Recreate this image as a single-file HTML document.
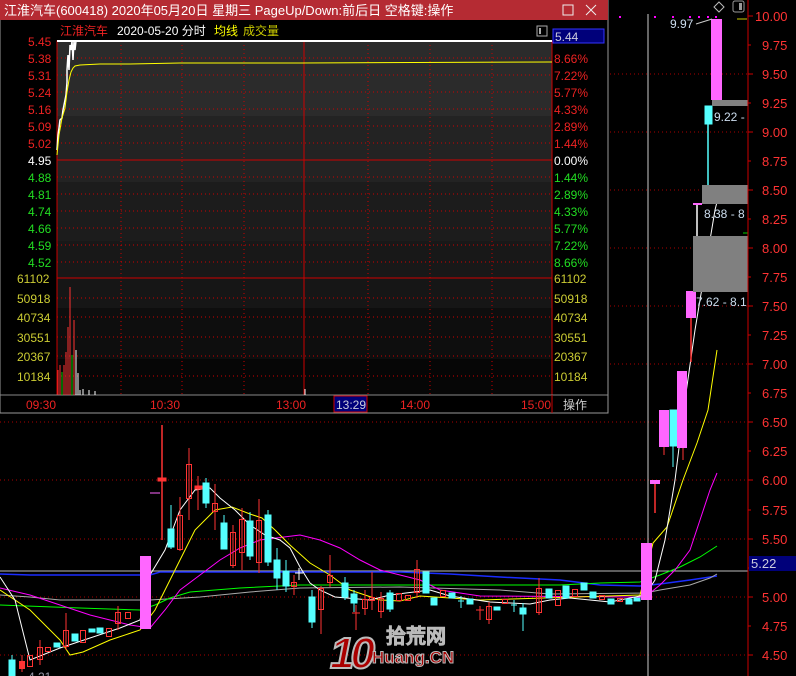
<!DOCTYPE html>
<html><head><meta charset="utf-8"><style>
html,body{margin:0;padding:0;background:#000;width:796px;height:676px;overflow:hidden}
svg text{font-family:"Liberation Sans","Noto Sans CJK SC",sans-serif}
</style></head><body>
<svg width="796" height="676" viewBox="0 0 796 676" xmlns="http://www.w3.org/2000/svg">
<rect width="796" height="676" fill="#000"/>
<!-- main chart grid -->
<g stroke="#a00" stroke-dasharray="1 3" stroke-width="1">
<line x1="610" y1="74" x2="748" y2="74"/><line x1="610" y1="132" x2="748" y2="132"/><line x1="610" y1="190" x2="748" y2="190"/>
<line x1="610" y1="248" x2="748" y2="248"/><line x1="610" y1="306" x2="748" y2="306"/><line x1="610" y1="364" x2="748" y2="364"/>
<line x1="0" y1="422" x2="748" y2="422"/><line x1="0" y1="480" x2="748" y2="480"/><line x1="0" y1="539" x2="748" y2="539"/>
<line x1="0" y1="597" x2="748" y2="597"/><line x1="0" y1="655" x2="748" y2="655"/>
</g>
<line x1="648" y1="14" x2="648" y2="676" stroke="#ccc"/>
<line x1="0" y1="571" x2="748" y2="571" stroke="#bbb"/>
<!-- MA lines -->
<g fill="none" stroke-width="1">
<polyline stroke="#1a2cff" stroke-width="1.5" points="0,574 30,575 150,575 160,572 300,572 400,572 450,574 500,577 560,580 600,585 640,586 660,584 690,580 717,576"/>
<polyline stroke="#aaa" points="0,595 30,597 60,600 150,600 200,597 250,592 300,588 400,587 500,590 550,594 645,593 660,590 690,585 710,578 717,574"/>
<polyline stroke="#0f0" points="0,605 80,608 140,610 155,605 170,598 190,592 240,588 300,585 400,585 560,585 600,583 640,582 660,575 680,567 700,557 717,546"/>
<polyline stroke="#f0f" points="0,588 30,595 60,605 90,615 130,625 150,628 165,610 180,590 200,575 220,560 240,548 260,540 300,535 320,540 340,548 360,560 380,570 420,580 440,590 480,596 645,597 660,585 675,570 690,550 700,520 710,490 717,473"/>
<polyline stroke="#ff0" points="0,590 30,610 60,640 70,655 83,652 110,640 140,630 155,610 165,590 180,560 195,530 215,510 232,507 250,514 262,518 275,530 290,545 310,563 330,575 350,590 380,600 400,601 420,596 480,600 640,595 653,543 667,527 683,480 697,443 708,410 717,350"/>
<polyline stroke="#fff" points="0,577 15,600 30,660 60,648 90,638 120,628 140,620 150,575 165,550 180,510 195,490 210,488 220,498 235,510 250,525 265,535 280,540 290,548 300,567 310,583 320,590 335,597 370,600 390,595 430,590 450,596 490,602 530,604 550,600 570,598 610,602 645,595 655,580 665,540 675,480 685,400 695,330 705,270 715,210 720,190"/>
</g>
<!-- candles -->
<g stroke-width="1">
<g fill="#5ff" stroke="#5ff">
<line x1="12" y1="655" x2="12" y2="676"/><rect x="9" y="660" width="6" height="16"/>
<rect x="54" y="643" width="6" height="4"/><rect x="72" y="634" width="6" height="7"/><rect x="89" y="629" width="6" height="3"/><rect x="97" y="628" width="6" height="5"/>
<line x1="171" y1="505" x2="171" y2="549"/><rect x="168" y="529" width="6" height="18"/>
<line x1="206" y1="478" x2="206" y2="508"/><rect x="203" y="483" width="6" height="20"/>
<line x1="224" y1="515" x2="224" y2="549"/><rect x="221" y="523" width="6" height="26"/>
<line x1="250" y1="512" x2="250" y2="560"/><rect x="247" y="521" width="6" height="35"/>
<line x1="268" y1="510" x2="268" y2="566"/><rect x="265" y="515" width="6" height="47"/>
<line x1="277" y1="548" x2="277" y2="590"/><rect x="274" y="560" width="6" height="18"/>
<line x1="286" y1="560" x2="286" y2="592"/><rect x="283" y="571" width="6" height="15"/>
<line x1="312" y1="590" x2="312" y2="628"/><rect x="309" y="597" width="6" height="25"/>
<rect x="342" y="583" width="6" height="14"/><line x1="345" y1="577" x2="345" y2="600"/>
<rect x="351" y="594" width="6" height="9"/><line x1="354" y1="590" x2="354" y2="612"/>
<rect x="387" y="593" width="6" height="16"/><line x1="390" y1="590" x2="390" y2="612"/>
<rect x="423" y="572" width="6" height="21"/>
<rect x="431" y="598" width="6" height="7"/><rect x="449" y="593" width="6" height="5"/>
<line x1="461" y1="596" x2="461" y2="608"/><line x1="458" y1="601" x2="464" y2="601"/>
<rect x="467" y="599" width="6" height="5"/><rect x="494" y="607" width="6" height="3"/>
<line x1="514" y1="600" x2="514" y2="612"/><line x1="511" y1="605" x2="517" y2="605"/>
<line x1="523" y1="603" x2="523" y2="631"/><rect x="520" y="608" width="6" height="6"/>
<rect x="546" y="589" width="6" height="9"/><rect x="563" y="586" width="6" height="12"/>
<rect x="581" y="583" width="6" height="7"/><rect x="590" y="592" width="6" height="6"/>
<rect x="608" y="599" width="6" height="5"/><rect x="626" y="599" width="6" height="5"/><rect x="634" y="598" width="6" height="3"/>
<line x1="673" y1="410" x2="673" y2="467"/><rect x="670" y="410" width="7" height="36"/>
<line x1="708" y1="106" x2="708" y2="185" stroke-width="1.5"/><rect x="705" y="106" width="7" height="18"/>
</g>
<g fill="none" stroke="#f33">
<line x1="22" y1="655" x2="22" y2="672"/><rect x="19.5" y="661.5" width="5" height="7" fill="#f33"/>
<rect x="27.5" y="655.5" width="5" height="11"/><line x1="40" y1="640" x2="40" y2="665"/><rect x="37.5" y="647.5" width="5" height="12"/>
<rect x="45.5" y="647.5" width="5" height="4"/>
<line x1="66" y1="613" x2="66" y2="650"/><rect x="63.5" y="630.5" width="5" height="16"/>
<rect x="80.5" y="630.5" width="5" height="12"/><rect x="106.5" y="628.5" width="5" height="8"/>
<line x1="118" y1="606" x2="118" y2="630"/><rect x="115.5" y="612.5" width="5" height="11"/><rect x="125.5" y="612.5" width="5" height="6"/>
<line x1="162" y1="425" x2="162" y2="540" stroke-width="1.5"/><rect x="158" y="478" width="8" height="3" fill="#f33"/>
<line x1="180" y1="497" x2="180" y2="551"/><rect x="177.5" y="515.5" width="5" height="34"/>
<line x1="189" y1="448" x2="189" y2="520"/><rect x="186.5" y="464.5" width="5" height="34"/>
<line x1="198" y1="476" x2="198" y2="510"/><rect x="195" y="486" width="7" height="3" fill="#f33"/>
<line x1="215" y1="484" x2="215" y2="530"/><rect x="212.5" y="503.5" width="5" height="8"/>
<line x1="233" y1="525" x2="233" y2="568"/><rect x="230.5" y="532.5" width="5" height="33"/>
<line x1="242" y1="508" x2="242" y2="570"/><rect x="239.5" y="519.5" width="5" height="33"/>
<line x1="259" y1="499" x2="259" y2="573"/><rect x="256.5" y="520.5" width="5" height="42"/>
<line x1="294" y1="575" x2="294" y2="595"/><rect x="291.5" y="582.5" width="5" height="4"/>
<line x1="321" y1="586" x2="321" y2="634"/><rect x="318.5" y="588.5" width="5" height="21"/>
<line x1="330" y1="555" x2="330" y2="587"/><rect x="327.5" y="575.5" width="5" height="7"/>
<line x1="356" y1="605" x2="356" y2="630"/><line x1="352" y1="613" x2="360" y2="613"/>
<line x1="365" y1="590" x2="365" y2="615"/><rect x="362.5" y="599.5" width="5" height="9"/>
<line x1="372" y1="572" x2="372" y2="610"/><rect x="369.5" y="597.5" width="5" height="3"/>
<line x1="381" y1="592" x2="381" y2="618"/><rect x="378.5" y="598.5" width="5" height="13"/>
<rect x="396.5" y="593.5" width="5" height="7"/><rect x="405.5" y="595.5" width="5" height="5"/>
<line x1="417" y1="560" x2="417" y2="598"/><rect x="414.5" y="569.5" width="5" height="23"/>
<rect x="440.5" y="590.5" width="5" height="6"/>
<line x1="480" y1="606" x2="480" y2="620"/><line x1="476" y1="610" x2="484" y2="610"/>
<line x1="489" y1="602" x2="489" y2="624"/><rect x="486.5" y="606.5" width="5" height="13"/>
<rect x="502.5" y="599.5" width="5" height="4"/>
<line x1="539" y1="578" x2="539" y2="615"/><rect x="536.5" y="588.5" width="5" height="24"/>
<rect x="555.5" y="590.5" width="5" height="15"/><rect x="572.5" y="589.5" width="5" height="7"/>
<rect x="599.5" y="595.5" width="5" height="4"/><rect x="617.5" y="598.5" width="5" height="3"/>
<line x1="664" y1="447" x2="664" y2="455"/><line x1="683" y1="447" x2="683" y2="460"/>
<line x1="691" y1="318" x2="691" y2="362" stroke-width="1.5"/>
<line x1="655" y1="483" x2="655" y2="513" stroke-width="1.5"/>
</g>
<rect x="140" y="556" width="11" height="73" fill="#f6f"/>
<rect x="641" y="543" width="11" height="57" fill="#f6f"/>
<rect x="650" y="480" width="10" height="4" fill="#f6f"/>
<rect x="659" y="410" width="10" height="37" fill="#f6f"/>
<rect x="677" y="371" width="10" height="77" fill="#f6f"/>
<rect x="686" y="291" width="10" height="27" fill="#f6f"/>
<rect x="711" y="19" width="11" height="81" fill="#f6f"/>
<line x1="697" y1="205" x2="697" y2="291" stroke="#fff" stroke-width="1.5"/>
<line x1="693" y1="204" x2="702" y2="204" stroke="#f6f" stroke-width="2"/>
<line x1="299" y1="568" x2="299" y2="580" stroke="#fff"/><line x1="295" y1="573" x2="303" y2="573" stroke="#fff"/>
<line x1="150" y1="493" x2="160" y2="493" stroke="#f6f"/>
</g>
<!-- gray boxes -->
<rect x="712" y="100" width="36" height="6" fill="#808080"/>
<rect x="702" y="185" width="46" height="19" fill="#808080"/>
<rect x="693" y="236" width="55" height="56" fill="#808080"/>
<g font-size="12" fill="#cde">
<text x="714" y="121">9.22 -</text><text x="704" y="218">8.38 - 8</text><text x="696" y="306">7.62 - 8.1</text><text x="670" y="28">9.97</text>
</g>
<line x1="696" y1="24" x2="712" y2="19" stroke="#ccc"/>
<g fill="#f0f"><rect x="619" y="16" width="2" height="2"/><rect x="654" y="16" width="2" height="2"/><rect x="672" y="16" width="2" height="2"/><rect x="689" y="16" width="2" height="2"/><rect x="698" y="16" width="2" height="2"/><rect x="707" y="16" width="2" height="2"/><rect x="715" y="16" width="2" height="2"/></g>
<line x1="737" y1="19" x2="747" y2="19" stroke="#cc0"/>
<line x1="743" y1="233" x2="748" y2="233" stroke="#0c0"/>
<path d="M719 2 L724 7 L719 12 L714 7 Z" fill="none" stroke="#bbb"/>
<rect x="733" y="1" width="11" height="11" rx="2" fill="none" stroke="#999"/><rect x="739" y="3" width="3" height="7" fill="#999"/>
<!-- right axis -->
<line x1="748" y1="0" x2="748" y2="676" stroke="#c00"/>
<g stroke="#c00">
<line x1="748" y1="16" x2="753" y2="16"/><line x1="748" y1="45" x2="751" y2="45"/><line x1="748" y1="74" x2="753" y2="74"/><line x1="748" y1="103" x2="751" y2="103"/><line x1="748" y1="132" x2="753" y2="132"/><line x1="748" y1="161" x2="751" y2="161"/><line x1="748" y1="190" x2="753" y2="190"/><line x1="748" y1="219" x2="751" y2="219"/><line x1="748" y1="248" x2="753" y2="248"/><line x1="748" y1="277" x2="751" y2="277"/><line x1="748" y1="306" x2="753" y2="306"/><line x1="748" y1="335" x2="751" y2="335"/><line x1="748" y1="364" x2="753" y2="364"/><line x1="748" y1="393" x2="751" y2="393"/><line x1="748" y1="422" x2="753" y2="422"/><line x1="748" y1="451" x2="751" y2="451"/><line x1="748" y1="480" x2="753" y2="480"/><line x1="748" y1="510" x2="751" y2="510"/><line x1="748" y1="539" x2="753" y2="539"/><line x1="748" y1="568" x2="751" y2="568"/><line x1="748" y1="597" x2="753" y2="597"/><line x1="748" y1="626" x2="751" y2="626"/><line x1="748" y1="655" x2="753" y2="655"/>
</g>
<g font-size="13" fill="#f33">
<text x="755" y="21">10.00</text><text x="762" y="50">9.75</text><text x="762" y="79">9.50</text><text x="762" y="108">9.25</text><text x="762" y="137">9.00</text><text x="762" y="166">8.75</text><text x="762" y="195">8.50</text><text x="762" y="224">8.25</text><text x="762" y="253">8.00</text><text x="762" y="282">7.75</text><text x="762" y="311">7.50</text><text x="762" y="340">7.25</text><text x="762" y="369">7.00</text><text x="762" y="398">6.75</text><text x="762" y="427">6.50</text><text x="762" y="456">6.25</text><text x="762" y="485">6.00</text><text x="762" y="515">5.75</text><text x="762" y="544">5.50</text><text x="762" y="602">5.00</text><text x="762" y="631">4.75</text><text x="762" y="660">4.50</text>
</g>
<rect x="749" y="556" width="47" height="15" fill="#00007a"/>
<text x="751" y="568" font-size="13" fill="#ccd">5.22</text>
<text x="28" y="681" font-size="12" fill="#99a">4.21</text>
<!-- watermark -->
<g>
<text x="330" y="668" font-size="44" font-weight="bold" fill="#a00" stroke="#bbb" stroke-width="2" font-style="italic" letter-spacing="-4">10</text>
<text x="386" y="643" font-size="20" fill="#333" stroke="#bbb" stroke-width="1.5">拾荒网</text>
<text x="372" y="663" font-size="17" font-weight="bold" fill="#a00" stroke="#bbb" stroke-width="1">Huang.CN</text>
</g>
<!-- popup -->
<rect x="0" y="0" width="608" height="413" fill="#000" stroke="#999"/>
<rect x="0" y="0" width="608" height="20" fill="#b52b33"/>
<text x="4" y="15" font-size="13" fill="#fff">江淮汽车(600418) 2020年05月20日 星期三 PageUp/Down:前后日 空格键:操作</text>
<rect x="563" y="5" width="10" height="10" fill="none" stroke="#eee"/>
<path d="M586 5 L596 15 M596 5 L586 15" stroke="#eee"/>
<text x="60" y="35" font-size="12" fill="#e22">江淮汽车</text>
<text x="117" y="35" font-size="12" fill="#fff">2020-05-20 分时</text>
<text x="214" y="35" font-size="12" fill="#ff0">均线</text>
<text x="243" y="35" font-size="12" fill="#cc0">成交量</text>
<rect x="537" y="26" width="10" height="10" fill="none" stroke="#aaa"/><rect x="539" y="28" width="2" height="6" fill="#aaa"/>
<rect x="553" y="29" width="51" height="14" fill="#00007a" stroke="#33f"/>
<text x="555" y="41" font-size="12" fill="#ccd">5.44</text>
<!-- bands -->
<rect x="57" y="41" width="495" height="75" fill="#2b2b2b"/>
<rect x="57" y="116" width="495" height="66" fill="#232323"/>
<rect x="57" y="182" width="495" height="59" fill="#1c1c1c"/>
<rect x="57" y="241" width="495" height="37" fill="#181818"/>
<rect x="57" y="278" width="495" height="30" fill="#161616"/>
<rect x="57" y="308" width="495" height="51" fill="#0e0e0e"/>
<rect x="57" y="359" width="495" height="36" fill="#060606"/>
<g stroke="#c00" stroke-dasharray="1 3">
<line x1="57" y1="58" x2="552" y2="58"/><line x1="57" y1="75" x2="552" y2="75"/><line x1="57" y1="92" x2="552" y2="92"/><line x1="57" y1="109" x2="552" y2="109"/><line x1="57" y1="126" x2="552" y2="126"/><line x1="57" y1="143" x2="552" y2="143"/>
<line x1="57" y1="177" x2="552" y2="177"/><line x1="57" y1="194" x2="552" y2="194"/><line x1="57" y1="211" x2="552" y2="211"/><line x1="57" y1="228" x2="552" y2="228"/><line x1="57" y1="245" x2="552" y2="245"/><line x1="57" y1="262" x2="552" y2="262"/>
<line x1="57" y1="298" x2="552" y2="298"/><line x1="57" y1="317" x2="552" y2="317"/><line x1="57" y1="337" x2="552" y2="337"/><line x1="57" y1="356" x2="552" y2="356"/><line x1="57" y1="376" x2="552" y2="376"/>
<line x1="121" y1="41" x2="121" y2="395"/><line x1="182" y1="41" x2="182" y2="395"/><line x1="244" y1="41" x2="244" y2="395"/><line x1="368" y1="41" x2="368" y2="395"/><line x1="430" y1="41" x2="430" y2="395"/><line x1="492" y1="41" x2="492" y2="395"/>
</g>
<g stroke="#c00" fill="none">
<rect x="57" y="41" width="495" height="354"/>
<line x1="57" y1="160" x2="552" y2="160"/><line x1="57" y1="278" x2="552" y2="278"/><line x1="304" y1="41" x2="304" y2="395"/>
<line x1="0" y1="395" x2="608" y2="395" stroke="#888"/>
</g>
<line x1="57" y1="41" x2="552" y2="41" stroke="#fff" stroke-width="2"/>
<polyline fill="none" stroke="#fff" stroke-width="1.5" points="57,150 58,135 59,128 60,120 62,118 63,110 64,105 66,95 67,82 67,70 68,55 69,70 70,45 71,50 72,41 73,60 74,41 75,50 76,41"/>
<polyline fill="none" stroke="#ff0" points="57,155 59,135 62,118 65,108 67,92 69,80 71,72 73,68 75,66 80,65 100,64 130,64 180,63 300,63 552,62"/>
<g stroke-width="1">
<line x1="58" y1="395" x2="58" y2="370" stroke="#f33"/><line x1="60" y1="395" x2="60" y2="365" stroke="#f33"/><line x1="62" y1="395" x2="62" y2="372" stroke="#0c0"/><line x1="64" y1="395" x2="64" y2="365" stroke="#f33"/><line x1="66" y1="395" x2="66" y2="352" stroke="#f33"/><line x1="68" y1="395" x2="68" y2="327" stroke="#f33"/><line x1="70" y1="395" x2="70" y2="287" stroke="#f33"/><line x1="72" y1="395" x2="72" y2="355" stroke="#0c0"/><line x1="74" y1="395" x2="74" y2="320" stroke="#f33"/><line x1="76" y1="395" x2="76" y2="350" stroke="#fff"/><line x1="78" y1="395" x2="78" y2="373" stroke="#fff"/>
<line x1="80" y1="395" x2="80" y2="390" stroke="#fff"/><line x1="83" y1="395" x2="83" y2="389" stroke="#fff"/><line x1="89" y1="395" x2="89" y2="390" stroke="#fff"/><line x1="95" y1="395" x2="95" y2="391" stroke="#fff"/><line x1="305" y1="395" x2="305" y2="389" stroke="#fff"/>
</g>
<g font-size="12" fill="#e22">
<text x="28" y="46">5.45</text><text x="28" y="63">5.38</text><text x="28" y="80">5.31</text><text x="28" y="97">5.24</text><text x="28" y="114">5.16</text><text x="28" y="131">5.09</text><text x="28" y="148">5.02</text>
<text x="554" y="63">8.66%</text><text x="554" y="80">7.22%</text><text x="554" y="97">5.77%</text><text x="554" y="114">4.33%</text><text x="554" y="131">2.89%</text><text x="554" y="148">1.44%</text>
</g>
<text x="28" y="165" font-size="12" fill="#fff">4.95</text><text x="554" y="165" font-size="12" fill="#fff">0.00%</text>
<g font-size="12" fill="#2d2">
<text x="28" y="182">4.88</text><text x="28" y="199">4.81</text><text x="28" y="216">4.74</text><text x="28" y="233">4.66</text><text x="28" y="250">4.59</text><text x="28" y="267">4.52</text>
<text x="554" y="182">1.44%</text><text x="554" y="199">2.89%</text><text x="554" y="216">4.33%</text><text x="554" y="233">5.77%</text><text x="554" y="250">7.22%</text><text x="554" y="267">8.66%</text>
</g>
<g font-size="12" fill="#cc3">
<text x="17" y="283">61102</text><text x="17" y="303">50918</text><text x="17" y="322">40734</text><text x="17" y="342">30551</text><text x="17" y="361">20367</text><text x="17" y="381">10184</text>
<text x="554" y="283">61102</text><text x="554" y="303">50918</text><text x="554" y="322">40734</text><text x="554" y="342">30551</text><text x="554" y="361">20367</text><text x="554" y="381">10184</text>
</g>
<g font-size="12" fill="#e22">
<text x="26" y="409">09:30</text><text x="150" y="409">10:30</text><text x="276" y="409">13:00</text><text x="400" y="409">14:00</text><text x="521" y="409">15:00</text>
</g>
<rect x="334" y="396" width="33" height="16" fill="#00007a" stroke="#c00"/>
<text x="336" y="409" font-size="12" fill="#ccd">13:29</text>
<line x1="552" y1="395" x2="552" y2="413" stroke="#c00"/>
<text x="563" y="409" font-size="12" fill="#ccc">操作</text>
</svg>
</body></html>
